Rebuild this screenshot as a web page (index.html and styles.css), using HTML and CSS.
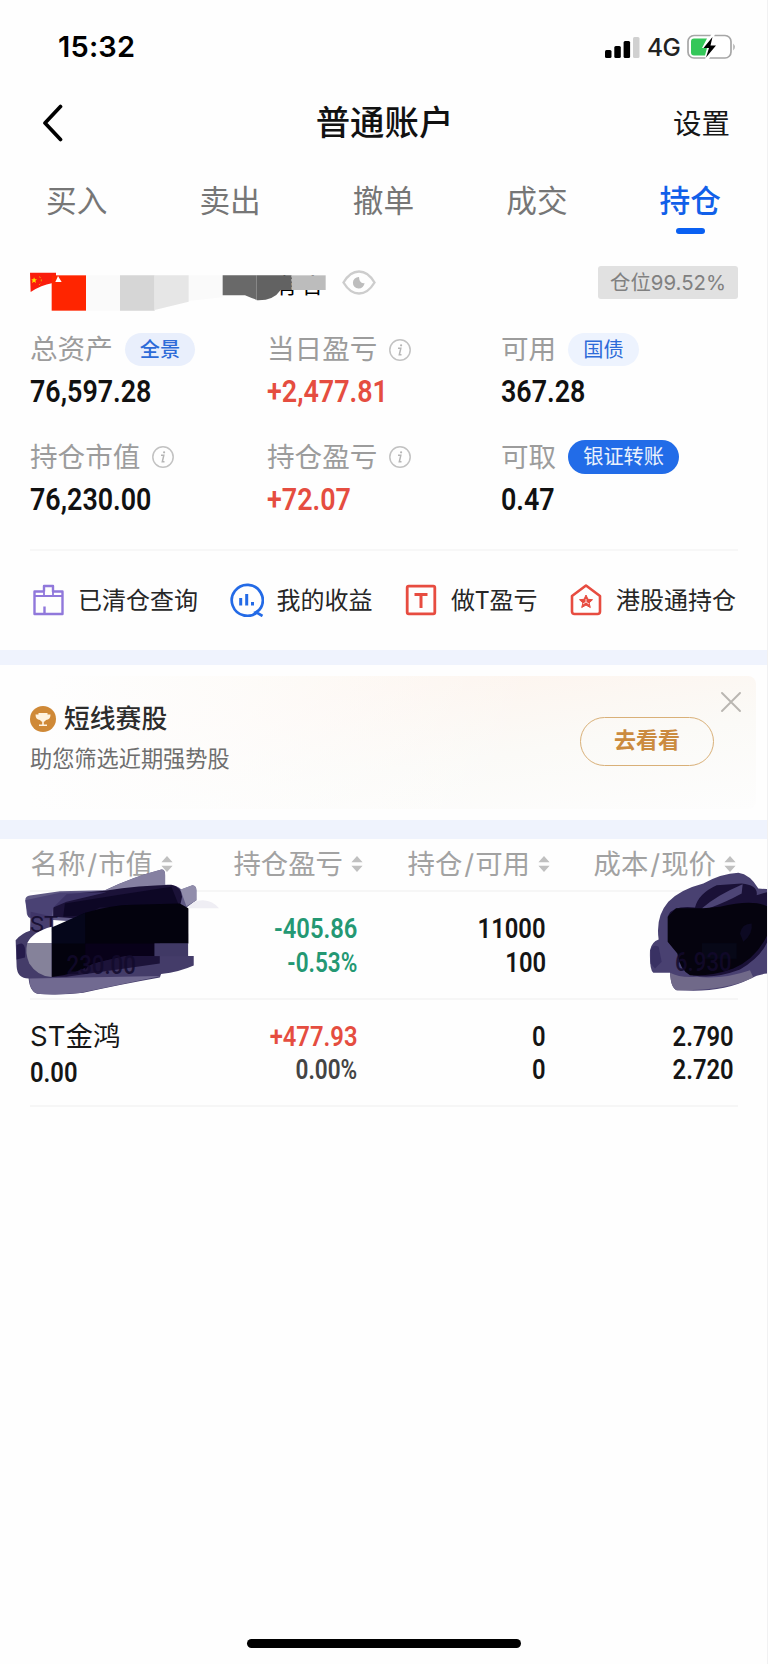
FILE: index.html
```html
<!DOCTYPE html>
<html lang="zh-CN">
<head>
<meta charset="utf-8">
<title>普通账户</title>
<link rel="stylesheet" href="styles.css">
</head>
<body>
<svg class="defs" width="0" height="0">
  <symbol id="info" viewBox="0 0 22 22"><circle cx="11" cy="11" r="10.2" fill="none" stroke="#c2c2c2" stroke-width="1.5"/><path d="M9 9.3h2.8L10.3 15.8h2.2" fill="none" stroke="#b5b5b5" stroke-width="1.5"/><circle cx="12.1" cy="6.3" r="1.1" fill="#b5b5b5"/></symbol>
  <symbol id="sort" viewBox="0 0 12 16"><path d="M6 0l5.6 6.3H.4zM6 16l5.6-6.3H.4z" fill="#c0c0c0"/></symbol>
</svg>
<div class="screen">
  <header class="status">
    <span class="time">15:32</span>
    <div class="signals">
      <svg width="36" height="22" viewBox="0 0 36 22"><rect x="0" y="14" width="6.5" height="8" rx="1.5"/><rect x="9.3" y="10" width="6.5" height="12" rx="1.5"/><rect x="18.6" y="5" width="6.5" height="17" rx="1.5"/><rect x="28" y="1" width="6.5" height="21" rx="1.5" fill="#d0d0d0"/></svg>
      <span class="net">4G</span>
      <svg width="50" height="26" viewBox="0 0 50 26"><rect x="1" y="1.5" width="43" height="22.5" rx="6" fill="#fff" stroke="#a6a6a6" stroke-width="1.7"/><path d="M7 4.500H20L15 14h5l-2 7.500H7q-3 0-3-3v-11q0-3 3-3z" fill="#34c759"/><path d="M24.500 0L16.500 14h4.500l-3 12h3.500L29 11.500h-5L28 0z" fill="#fff"/><path d="M25.500 3L16.500 14h5.500l-3 9.500L29 11.500h-5.500z"/><path d="M46.300 9.500q3 3.200 0 7z" fill="#a6a6a6"/></svg>
    </div>
  </header>

  <nav class="titlebar">
    <svg class="back" width="21" height="38" viewBox="0 0 21 38"><path d="M18.500 2.500L3 19l15.500 16.500" fill="none" stroke="#000" stroke-width="3.700" stroke-linecap="round" stroke-linejoin="round"/></svg>
    <h1 class="title">普通账户</h1>
    <span class="settings">设置</span>
  </nav>

  <nav class="tabs">
    <span class="tab">买入</span><span class="tab">卖出</span><span class="tab">撤单</span><span class="tab">成交</span><span class="tab active">持仓</span>
  </nav>

  <section class="account">
    <svg class="masked" width="300" height="44" viewBox="90 60 900 132">
      <text class="remnant" x="826" y="129">有</text><text class="remnant" x="904" y="129">合</text>
      <path d="M258 76H360V182H258zM565 76H668V142L565 153z" fill="#fafafa"/>
      <path d="M835 60H990V76H835z" fill="#fefefe"/>
      <path d="M90 68H168V90L185 96L155 100Q125 105 92 126z" fill="#fa1d0c"/>
      <rect x="155" y="76" width="103" height="106" fill="#ff2500"/>
      <path d="M166 96L174 78L185 96z" fill="#fff"/>
      <path d="M102 82l3 6 6 0-5 4 2 7-6-4-6 4 2-7-4-4 6 0z" fill="#ffde00"/>
      <path d="M117 80l5 3M124 88v6M121 101l-4 4" stroke="#e5a000" stroke-width="3"/>
      <path d="M360 76H464V182H360z" fill="#d6d6d6"/><path d="M464 76H566V155L464 180z" fill="#e6e6e6"/>
      <path d="M668 76H770V149Q755 145 735 136H668z" fill="#696969"/>
      <path d="M770 76H875V120H842Q820 153 770 151z" fill="#626262"/>
      <rect x="875" y="76" width="102" height="44" fill="#bcbcbc"/>
    </svg>
    <svg class="eye" width="34" height="25" viewBox="0 0 34 25"><path d="M1.500 12.500Q8 1.500 17 1.500T32.500 12.500Q26 23.500 17 23.500T1.500 12.500z" fill="none" stroke="#cdcdcd" stroke-width="2.400"/><path d="M17 7a5.800 5.800 0 1 0 5.500 6q-5 1-5.500-6z" fill="#bdbdbd"/></svg>
    <span class="ratio">仓位99.52%</span>
  </section>

  <section class="stats">
    <div class="stat"><div class="label"><span>总资产</span><span class="pill first">全景</span></div><div class="value">76,597.28</div></div>
    <div class="stat"><div class="label"><span>当日盈亏</span><svg class="info"><use href="#info"/></svg></div><div class="value up">+2,477.81</div></div>
    <div class="stat"><div class="label"><span>可用</span><span class="pill">国债</span></div><div class="value">367.28</div></div>
    <div class="stat"><div class="label"><span>持仓市值</span><svg class="info"><use href="#info"/></svg></div><div class="value">76,230.00</div></div>
    <div class="stat"><div class="label"><span>持仓盈亏</span><svg class="info"><use href="#info"/></svg></div><div class="value up">+72.07</div></div>
    <div class="stat"><div class="label"><span>可取</span><span class="pill solid">银证转账</span></div><div class="value">0.47</div></div>
  </section>

  <section class="links">
    <a class="link"><svg width="34" height="34" viewBox="0 0 34 34" fill="none" stroke="#9078db" stroke-width="2.400" stroke-linejoin="round"><path d="M13 8.500V3H22V8.500H31.500V31H3.500V8.500H13M13.500 31V23.500"/><path d="M3.500 13H31.500" stroke-width="2"/><path d="M13 8V12M22 8V12" stroke-width="1.800"/></svg><span>已清仓查询</span></a>
    <a class="link"><svg width="34" height="34" viewBox="0 0 34 34" fill="none" stroke="#236ae6" stroke-width="2.700"><path d="M28 28.500A15.500 15.500 0 1 1 31 24.500Q29.500 27.500 26 29.200L32.500 33"/><path d="M10.700 15V22.500M16.700 11V22.500M22.500 19V22.500" stroke-width="3"/></svg><span>我的收益</span></a>
    <a class="link"><svg width="34" height="34" viewBox="0 0 34 34" fill="none" stroke="#e74c40" stroke-width="2.800"><rect x="3.200" y="3.200" width="27.600" height="27.600" rx="1.500"/><path d="M10.500 11.500H23.500M17 11.500V25" stroke-width="3"/></svg><span>做T盈亏</span></a>
    <a class="link"><svg width="34" height="34" viewBox="0 0 34 34" fill="none" stroke="#e74c40" stroke-width="2.600" stroke-linejoin="round"><path d="M17 2.500L31 13V28.500Q31 31 28.500 31H5.500Q3 31 3 28.500V13z"/><path d="M17 12l2 4.300 4.500.4-3.400 3.200 1.200 4.600-4.300-2.400-4.300 2.400 1.200-4.600-3.400-3.200 4.500-.4z" fill="#e74c40" stroke-width="1"/><path d="M17 16v3l-3 2m3-2l3 2" stroke="#fff" stroke-width=".8"/></svg><span>港股通持仓</span></a>
  </section>

  <section class="promo-wrap">
    <div class="promo">
      <div class="promo-copy">
        <div class="promo-title"><svg width="26" height="26" viewBox="0 0 26 26"><circle cx="13" cy="13" r="13" fill="#cf8937"/><path d="M8.500 7h9v1.500h3q0 5-4.500 5.500-1 1.500-2.200 1.800v2.700H17V20H9v-1.500h3.200v-2.700Q11 15.500 10 14q-4.500-.5-4.500-5.500h3z" fill="#fff3e0"/></svg><span>短线赛股</span></div>
        <div class="promo-sub">助您筛选近期强势股</div>
      </div>
      <span class="go">去看看</span>
      <svg class="close" width="20" height="20" viewBox="0 0 20 20"><path d="M1 1l18 18M19 1L1 19" stroke="#b9b6b1" stroke-width="1.900" stroke-linecap="round"/></svg>
    </div>
  </section>

  <section class="holdings">
    <div class="thead">
      <span class="th">名称<i>/</i>市值<svg class="sort"><use href="#sort"/></svg></span><span class="th">持仓盈亏<svg class="sort"><use href="#sort"/></svg></span><span class="th">持仓<i>/</i>可用<svg class="sort"><use href="#sort"/></svg></span><span class="th">成本<i>/</i>现价<svg class="sort"><use href="#sort"/></svg></span>
    </div>
    <div class="row">
      <div class="cell name"></div>
      <div class="cell down"><b class="num">-405.86</b><b class="num pct">-0.53%</b></div>
      <div class="cell"><b class="num">11000</b><b class="num">100</b></div>
      <div class="cell"></div>
    </div>
    <div class="row">
      <div class="cell name"><b class="stock">ST金鸿</b><b class="num">0.00</b></div>
      <div class="cell"><b class="num up">+477.93</b><b class="num pct dim">0.00%</b></div>
      <div class="cell"><b class="num">0</b><b class="num">0</b></div>
      <div class="cell"><b class="num">2.790</b><b class="num">2.720</b></div>
    </div>

    <svg class="scribble left" viewBox="0 0 700 560">
      <path d="M76 240Q76 228 90 226L180 213L315 210Q400 170 485 148Q497 148 496 165V194Q530 192 545 208L578 195Q590 196 590 210V240L560 262L480 290L300 310L90 294Q80 288 80 275z" fill="#5f5984"/>
      <path d="M315 211Q400 170 485 148Q497 148 496 165V196Q410 200 315 214z" fill="#8580a1"/>
      <path d="M542 208L578 195Q590 196 590 210V240L560 258z" fill="#918dab"/>
      <path d="M200 222L315 212Q420 196 515 194Q545 200 547 230L540 262H460L300 300L160 290V262z" fill="#1b1238"/>
      <path d="M76 240L180 218L320 216L200 245L160 262L155 290H85z" fill="#453c70" opacity=".8"/>
      <path d="M195 250Q350 225 515 200L540 262H300L256 285L190 290z" fill="#0a0520" opacity=".8"/>
      <path d="M92 275L160 290V330L90 340z" fill="#3e3567" opacity=".95"/>
      <path d="M47 360Q65 340 90 332L300 300L565 340V408H582V436Q540 455 484 462L480 472Q350 495 250 518Q190 526 120 522Q90 520 86 475Q52 475 50 440z" fill="#443c69"/>
      <path d="M88 475L484 468Q330 500 240 519Q160 526 112 521Q88 512 88 475z" fill="#716a91"/>
      <path d="M155 370H480V430L200 470H155z" fill="#1c1339"/>
      <path d="M50 375Q80 355 75 412L50 418z" fill="#251b4b"/>
      <text class="ghost thin" x="90" y="336" textLength="84" lengthAdjust="spacingAndGlyphs">ST</text>
      <path d="M155 471V325L200 305L256 278Q330 255 400 254L540 250L566 264V370H464V408H360L280 430Q230 462 155 471z" fill="#03020d"/>
      <path d="M155 322L256 278V370H155z" fill="#05061a"/>
      <path d="M256 370H464V408H375L270 432L256 450z" fill="#080119"/>
      <rect x="464" y="370" width="101" height="38" fill="#403965"/>
      <path d="M155 320V369H82Q98 335 155 320z" fill="#fff"/>
      <path d="M82 369H155V471Q112 468 88 430Q74 400 82 369z" fill="#85829a"/>
      <path d="M565 264Q580 239 610 240Q640 242 658 264z" fill="#efeef4"/>
      <text class="ghost" x="200" y="463" textLength="208" lengthAdjust="spacingAndGlyphs">230.00</text>
    </svg>
    <svg class="scribble right" viewBox="780 0 384 560">
      <path d="M810 390Q815 365 836 358Q826 290 865 245Q900 208 970 190Q1025 160 1075 158Q1110 163 1135 205L1164 207V460Q1135 462 1110 476Q1040 512 940 512L890 510Q873 505 870 458H820Q808 450 810 390z" fill="#494171"/>
      <path d="M870 458Q900 474 950 470Q1030 478 1110 450L1120 472Q1040 512 890 510Q873 505 870 458z" fill="#706989"/>
      <path d="M812 390Q820 370 836 380L845 425L825 445L812 430z" fill="#393163"/>
      <path d="M945 262Q955 220 1010 195L1085 190Q1135 195 1130 225L1164 215V360Q1145 410 1080 448Q1000 478 940 465Q905 458 895 400L865 365V285Q880 255 945 262z" fill="#1a1137"/>
      <path d="M965 265Q1010 225 1088 192L1085 220Q1040 245 985 265z" fill="#4d4576"/>
      <path d="M863 290L888 264H970L1020 260Q1120 235 1164 260V340Q1130 415 1060 445Q990 470 930 465Q900 450 892 400L863 365z" fill="#05030e"/>
      <path d="M1080 340Q1085 310 1115 310Q1120 340 1090 365z" fill="#0c0922"/>
      <rect x="966" y="369" width="104" height="47" fill="#070817"/>
      <text class="ghost" x="885" y="452" textLength="170" lengthAdjust="spacingAndGlyphs">6.930</text>
    </svg>
  </section>

  <footer class="home"><div class="bar"></div></footer>
</div>
</body>
</html>
```
FILE: styles.css
```css
* { box-sizing: border-box; }
body { margin: 0; background: #fefefe; font-family: Inter, "Noto Sans CJK SC", sans-serif; color: #161616; }
.defs { position: absolute; }
.screen { width: 768px; height: 1664px; display: flex; flex-direction: column; overflow: hidden; border-right: 1px solid #f1f1f2; }
svg { flex: none; display: block; }
span, b { white-space: nowrap; }

.status { height: 94px; padding: 0 30px 0 58px; display: flex; align-items: center; justify-content: space-between; }
.time { font: 600 29px/30px Inter, sans-serif; letter-spacing: .2px; color: #000; }
.signals { display: flex; align-items: center; }
.net { font: 500 24.5px/26px Inter, sans-serif; margin: 0 6px 0 6px; width: 34px; letter-spacing: -.6px; color: #222; }

.titlebar { height: 58px; display: grid; grid-template-columns: 1fr auto 1fr; align-items: center; padding: 0 37px 0 42px; }
.title { margin: -7px 3px 0 0; font: 500 34.4px/50px "Noto Sans CJK SC", sans-serif; color: #111; }
.settings { justify-self: end; font-size: 28.5px; line-height: 40px; padding-top: 2px; }

.tabs { height: 98px; display: grid; grid-template-columns: repeat(5, 1fr); }
.tab { display: flex; flex-direction: column; align-items: center; padding-top: 26px; font-size: 30.7px; line-height: 46px; color: #767676; }
.tab.active { color: #1160e9; font-weight: 500; }
.tab.active::after { content: ""; width: 29px; height: 6px; border-radius: 3px; background: #0a60f2; margin-top: 4px; }

.account { height: 75px; padding: 16px 29px 0 30px; display: flex; align-items: flex-start; }
.masked { margin-top: 4px; overflow: visible; }
.remnant { font: 66px "Noto Sans CJK SC", sans-serif; }
.eye { margin: 4px 0 0 12px; }
.ratio { margin-left: auto; width: 140px; height: 33px; border-radius: 3px; background: #e1e1e1; color: #808080; font-size: 20.4px; line-height: 34px; text-align: center; }

.stats { height: 226px; margin: 0 29px 0 30px; display: grid; grid-template-columns: 237px 234px 1fr; grid-auto-rows: 107.5px; border-bottom: 2px solid #f7f7f7; }
.label { display: flex; align-items: center; height: 49px; font-size: 27.6px; line-height: 40px; color: #9c9c9c; }
.label > span:first-child { margin-top: -1px; }
.info { width: 22px; height: 22px; margin-left: 12px; }
.pill { margin-left: 12px; padding: 0 15px; height: 33.5px; border-radius: 17px; font-size: 20.2px; line-height: 34px; background: #edf3fe; color: #2d6bd8; }
.pill.first { background: #e9effc; font-weight: 500; }
.pill.solid { background: #226ce8; color: #eaf1fd; }
.value { font: 600 32px/36px Roboto, sans-serif; margin-top: -1px; transform: scaleX(.84); transform-origin: left; color: #111; }
.value.up, .num.up { color: #e54d40; }

.links { height: 99px; padding: 0 31px 0 31px; display: flex; align-items: center; justify-content: space-between; }
.link { display: flex; align-items: center; gap: 13px; font: 400 24px/34px "Noto Sans CJK SC", sans-serif; color: #262626; }
.link span { margin-top: -3px; }
.link svg { margin-top: -1px; }

.promo-wrap { height: 189px; border: solid #eff3fd; border-width: 15px 0 19px; padding: 11px 11px 0; }
.promo { position: relative; height: 133px; border-radius: 8px; padding: 0 42px 0 19px; display: flex; align-items: center; justify-content: space-between; background: linear-gradient(172deg, #faf5e9 0%, #fdf5ef 28%, #fbfaf7 62%, #fdfdfd 100%); }
.promo::before { content: ""; position: absolute; inset: 0; background: linear-gradient(100deg, #fefefe 5%, rgba(254,254,254,.7) 30%, rgba(254,254,254,0) 68%); }
.promo-copy, .go { position: relative; }
.promo-copy { margin-top: -8px; }
.promo-title { display: flex; align-items: center; gap: 8px; font-size: 25.8px; line-height: 40px; font-weight: 500; color: #2c2c2c; }
.promo-sub { font-size: 22.2px; line-height: 40px; color: #6e6e6e; }
.go { width: 134px; height: 49px; margin-top: -3px; border: 1.5px solid #d9b078; border-radius: 25px; text-align: center; font-size: 22px; line-height: 45px; font-weight: 700; color: #cb8b3f; }
.close { position: absolute; right: 15px; top: 16px; }

.holdings { position: relative; padding: 0 29px 0 30px; }
.thead { height: 53px; display: grid; grid-template-columns: 143px 190px 187px 186px; justify-items: end; align-items: center; border-bottom: 2px solid #f6f6f6; padding-bottom: 2px; }
.th { display: flex; align-items: center; font-size: 27.4px; line-height: 40px; color: #a2a2a2; }
.th i { font-style: normal; padding: 0 1px 0 2px; }
.sort { width: 12px; height: 16px; margin-left: 8px; }
.row { height: 107.5px; border-bottom: 2px solid #f6f6f6; display: grid; grid-template-columns: 150px 177px 189px 188px; padding-top: 20px; }
.cell { display: flex; flex-direction: column; align-items: flex-end; }
.num { font: 600 27.5px/33.8px Roboto, sans-serif; transform: scaleX(.865); transform-origin: right; color: #151515; }
.num.pct { transform: scaleX(.82); }
.down .num { color: #249873; }
.num.dim { color: #444; }
.name { align-items: flex-start; }
.name .num { transform-origin: left; margin-top: 3px; }
.stock { font: 400 27.5px/33.5px Inter, "Noto Sans CJK SC", sans-serif; }
.scribble { position: absolute; top: -19px; height: 187px; }
.scribble.left { left: 0; width: 233px; }
.scribble.right { left: 640px; width: 128px; }
.ghost { font: 500 78px Roboto, sans-serif; fill: #120a2b; opacity: .85; }
.ghost.thin { font-size: 66px; font-weight: 400; }

.home { margin-top: auto; height: 25px; display: flex; justify-content: center; }
.bar { width: 274px; height: 9px; border-radius: 5px; background: #000; }
```
